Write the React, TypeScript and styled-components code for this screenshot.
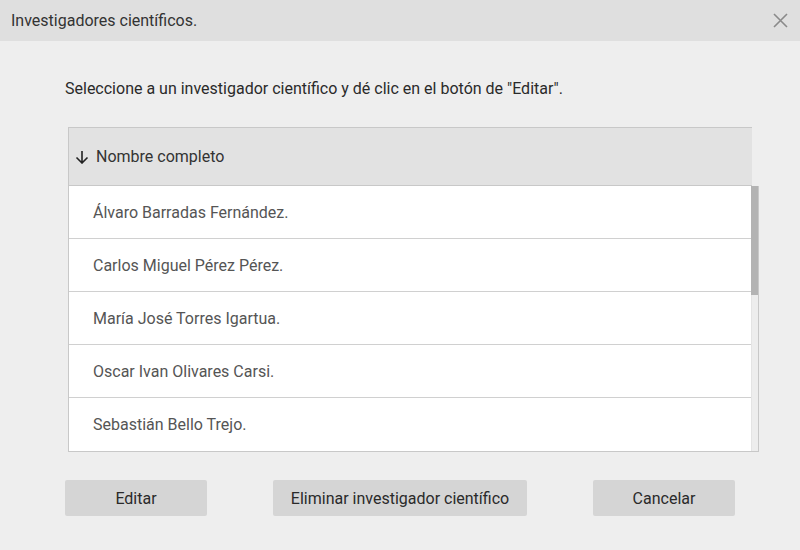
import React from "react";
import styled, { createGlobalStyle } from "styled-components";

const Global = createGlobalStyle`
  html, body { margin: 0; padding: 0; }
  body { background: #eeeeee; font-family: Roboto, "Liberation Sans", Arial, sans-serif; }
  * { box-sizing: border-box; }
`;

const Dialog = styled.div`
  width: 800px;
  height: 550px;
  background: #eeeeee;
  display: flex;
  flex-direction: column;
  overflow: hidden;
`;

const TitleBar = styled.div`
  height: 41px;
  background: #dfdfdf;
  display: flex;
  align-items: center;
  justify-content: space-between;
  padding: 0 12px 0 11px;
  flex-shrink: 0;
`;

const Title = styled.span`
  font-size: 16px;
  color: #333333;
  line-height: 20px;
`;

const CloseButton = styled.button`
  border: none;
  background: transparent;
  padding: 0;
  width: 16px;
  height: 16px;
  display: flex;
  align-items: center;
  justify-content: center;
  cursor: pointer;
`;

const Body = styled.div`
  padding: 38px 0 0 65px;
  display: flex;
  flex-direction: column;
`;

const Instruction = styled.p`
  margin: 0;
  font-size: 16px;
  line-height: 20px;
  color: #2a2a2a;
`;

const Table = styled.div`
  margin: 28px 0 0 3px;
  width: 691px;
  display: flex;
  flex-direction: column;
`;

const HeaderRow = styled.div`
  width: 684px;
  height: 59px;
  background: #e2e2e2;
  border: 1px solid #c8c8c8;
  border-right: none;
  display: flex;
  align-items: center;
  gap: 7px;
  padding-left: 6px;
  font-size: 16px;
  color: #333333;
`;

const ListBox = styled.div`
  display: flex;
  border: 1px solid #c8c8c8;
  border-top: none;
  background: #ffffff;
  height: 266px;
`;

const Rows = styled.div`
  flex: 1;
  display: flex;
  flex-direction: column;
`;

const Row = styled.div<{ $last?: boolean }>`
  height: ${(p) => (p.$last ? 52 : 53)}px;
  border-bottom: ${(p) => (p.$last ? "none" : "1px solid #d0d0d0")};
  display: flex;
  align-items: center;
  padding-left: 24px;
  font-size: 16px;
  color: #555555;
  background: #ffffff;
`;

const ScrollTrack = styled.div`
  width: 7px;
  background: #ededed;
  border-left: 1px solid #e4e4e4;
  display: flex;
  flex-direction: column;
`;

const ScrollThumb = styled.div`
  height: 109px;
  background: #b3b3b3;
  margin-left: -1px;
`;

const ButtonRow = styled.div`
  margin-top: 28px;
  padding: 0 65px;
  display: flex;
  justify-content: space-between;
`;

const Button = styled.button<{ $w: number }>`
  width: ${(p) => p.$w}px;
  height: 36px;
  border: none;
  border-radius: 2px;
  background: #d5d5d5;
  font-family: Roboto, "Liberation Sans", Arial, sans-serif;
  font-size: 16px;
  color: #2a2a2a;
  cursor: pointer;
  padding: 0;
`;

const names = [
  "Álvaro Barradas Fernández.",
  "Carlos Miguel Pérez Pérez.",
  "María José Torres Igartua.",
  "Oscar Ivan Olivares Carsi.",
  "Sebastián Bello Trejo.",
];

export default function App() {
  return (
    <>
      <Global />
      <Dialog>
        <TitleBar>
          <Title>Investigadores científicos.</Title>
          <CloseButton aria-label="Cerrar">
            <svg width="15" height="15" viewBox="0 0 15 15">
              <path d="M1 1 L14 14 M14 1 L1 14" stroke="#8a8a8a" strokeWidth="1.6" fill="none" />
            </svg>
          </CloseButton>
        </TitleBar>
        <Body>
          <Instruction>
            Seleccione a un investigador científico y dé clic en el botón de "Editar".
          </Instruction>
          <Table>
            <HeaderRow>
              <svg width="14" height="14" viewBox="0 0 14 14">
                <path d="M7 1 V13 M1.5 7.5 L7 13 L12.5 7.5" stroke="#222" strokeWidth="1.6" fill="none" />
              </svg>
              <span>Nombre completo</span>
            </HeaderRow>
            <ListBox>
              <Rows>
                {names.map((n, i) => (
                  <Row key={n} $last={i === names.length - 1}>
                    {n}
                  </Row>
                ))}
              </Rows>
              <ScrollTrack>
                <ScrollThumb />
              </ScrollTrack>
            </ListBox>
          </Table>
        </Body>
        <ButtonRow>
          <Button $w={142}>Editar</Button>
          <Button $w={254}>Eliminar investigador científico</Button>
          <Button $w={142}>Cancelar</Button>
        </ButtonRow>
      </Dialog>
    </>
  );
}
